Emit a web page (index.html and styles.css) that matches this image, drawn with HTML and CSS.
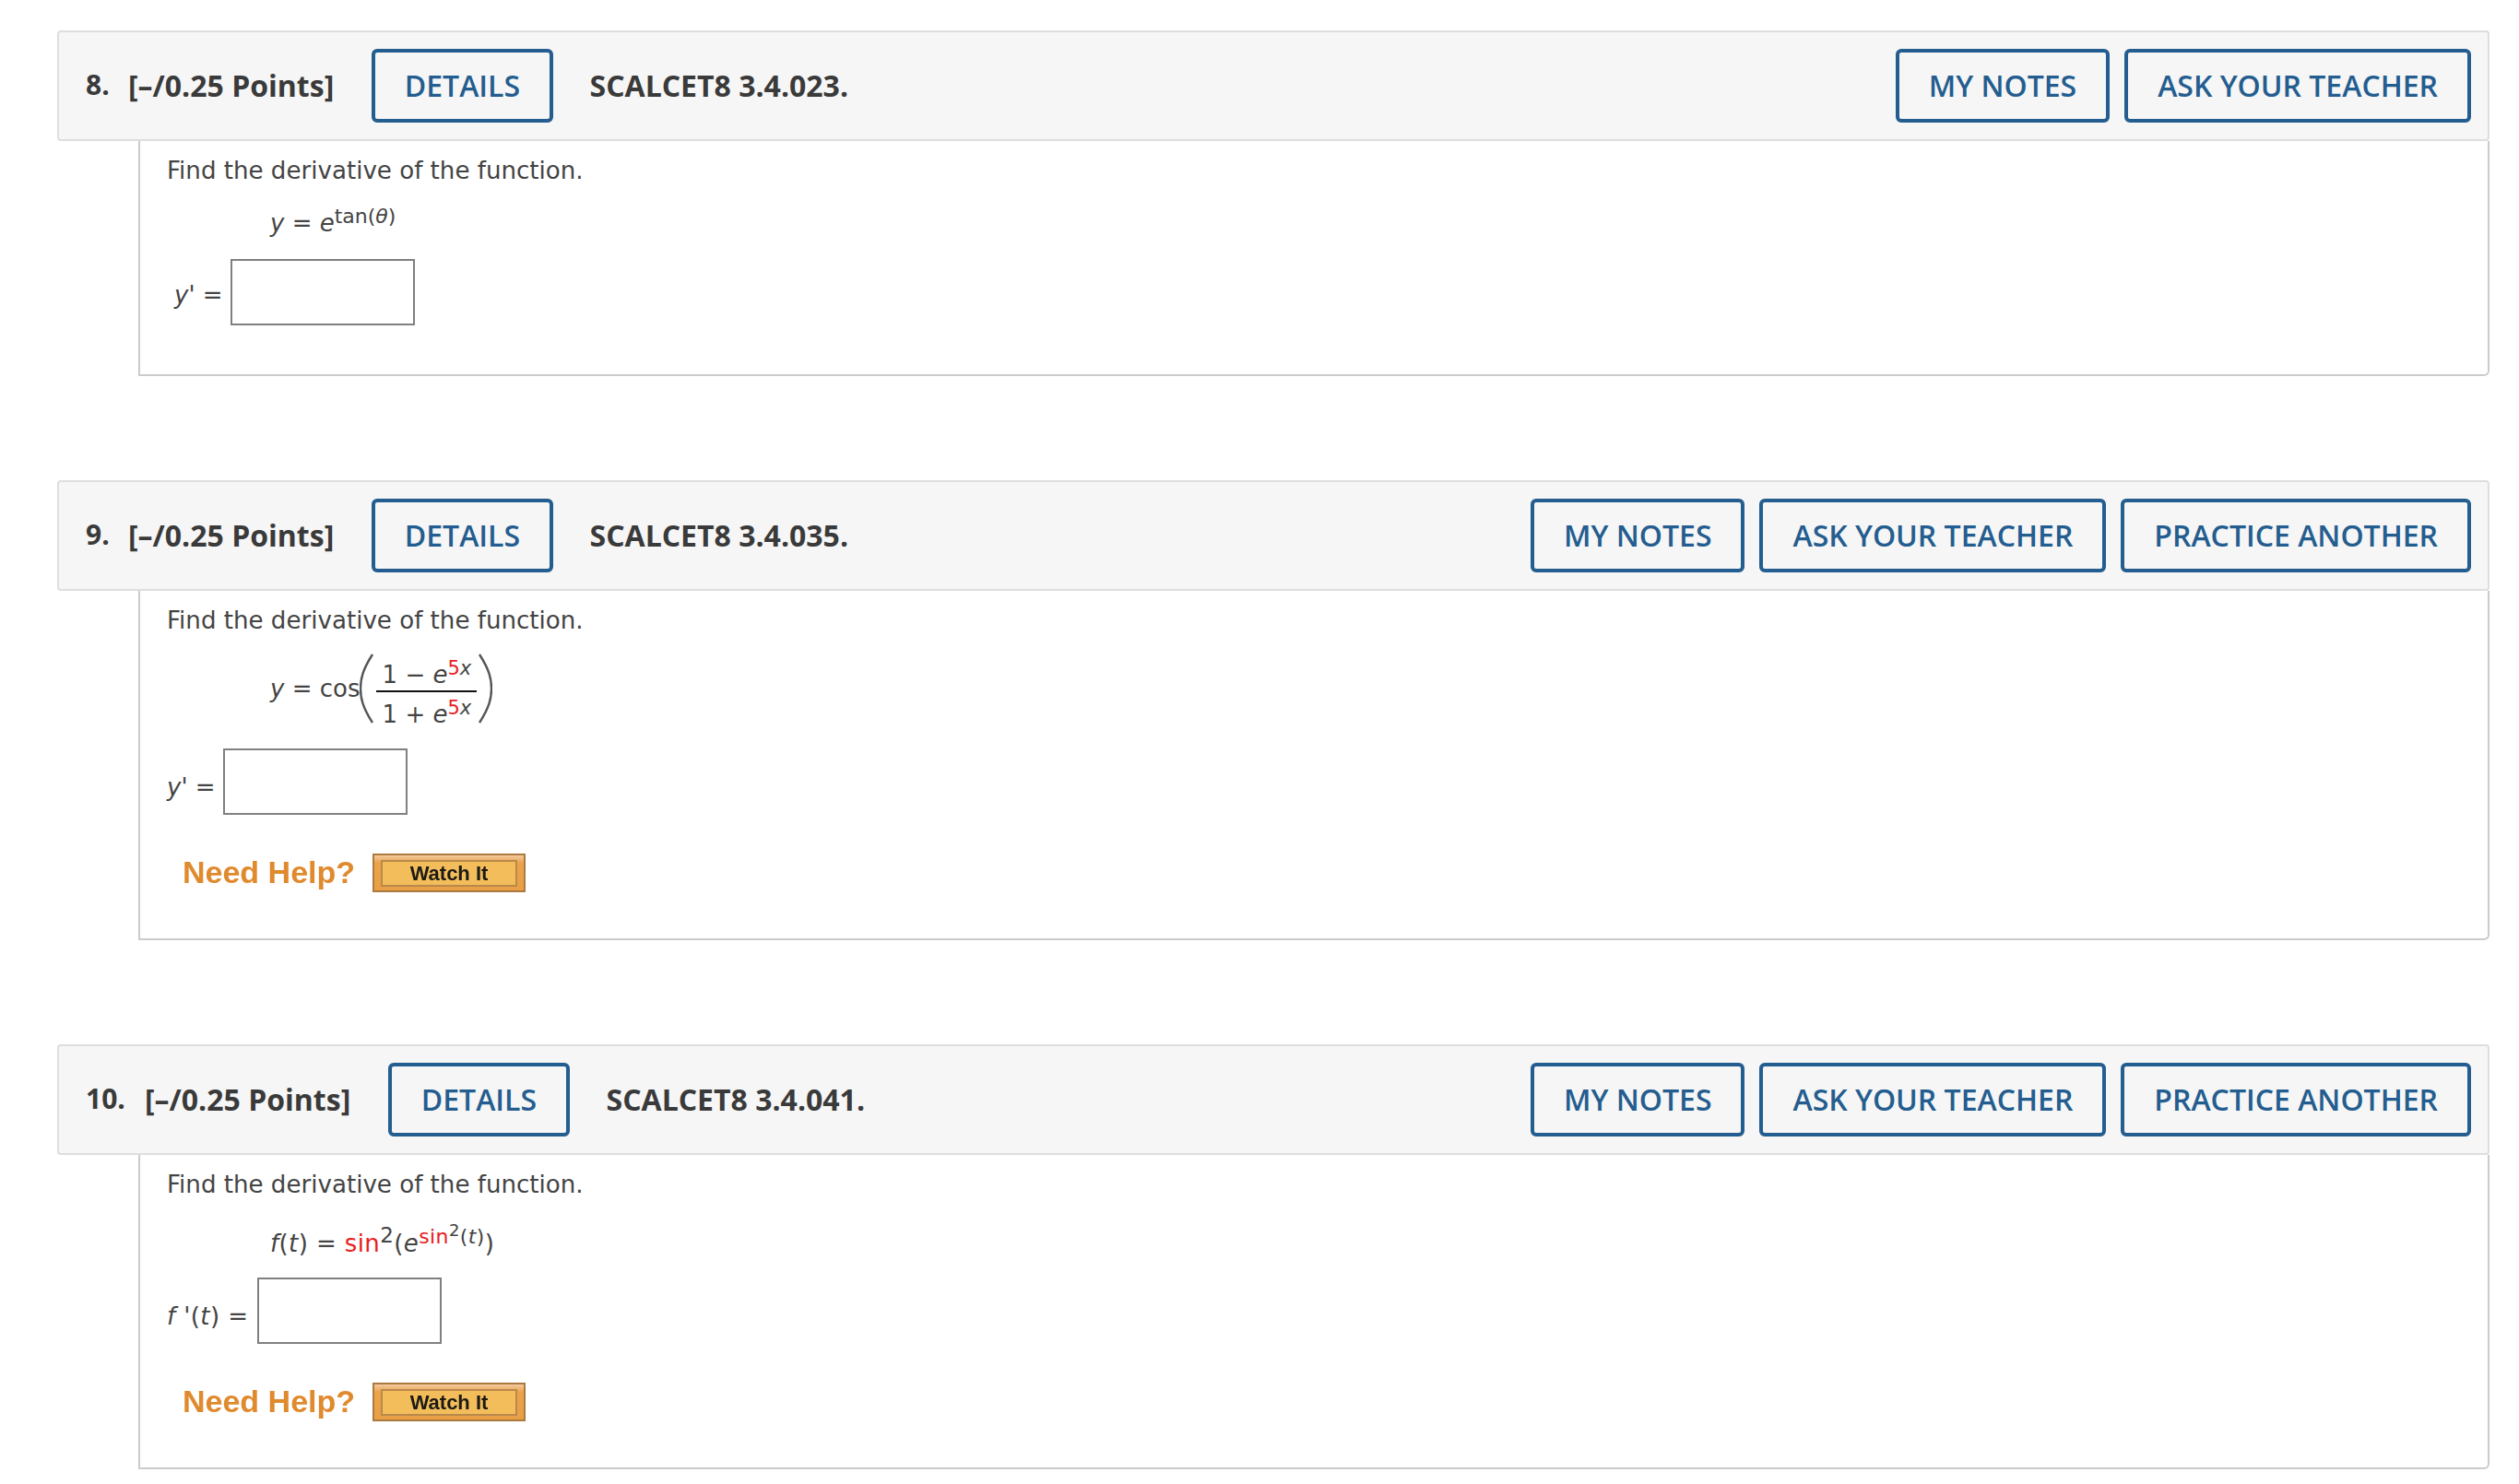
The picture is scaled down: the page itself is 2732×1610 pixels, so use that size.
FILE: index.html
```html
<!DOCTYPE html>
<html lang="en">
<head>
<meta charset="utf-8">
<title>SCALCET8 questions</title>
<link rel="stylesheet" href="styles.css">
</head>
<body>
<main class="page">
  <section class="question q8">
    <header class="qhead">
      <span class="num">8.</span>
      <span class="pts">[–/0.25 Points]</span>
      <button class="btn details">DETAILS</button>
      <span class="code">SCALCET8 3.4.023.</span>
      <div class="actions">
        <button class="btn">MY NOTES</button>
        <button class="btn">ASK YOUR TEACHER</button>
      </div>
    </header>
    <div class="qbody">
      <p class="prompt">Find the derivative of the function.</p>
      <div class="formula f8"><i>y</i>&nbsp;= <i>e</i><span class="sup">tan(<i>θ</i>)</span></div>
      <div class="answer a8"><span class="label l8"><i>y'</i> =</span><input class="field" type="text"></div>
    </div>
  </section>

  <section class="question q9">
    <header class="qhead">
      <span class="num">9.</span>
      <span class="pts">[–/0.25 Points]</span>
      <button class="btn details">DETAILS</button>
      <span class="code">SCALCET8 3.4.035.</span>
      <div class="actions">
        <button class="btn">MY NOTES</button>
        <button class="btn">ASK YOUR TEACHER</button>
        <button class="btn">PRACTICE ANOTHER</button>
      </div>
    </header>
    <div class="qbody">
      <p class="prompt">Find the derivative of the function.</p>
      <div class="formula f9">
        <span><i>y</i>&nbsp;= cos</span>
        <svg class="paren" viewBox="0 0 16 76" width="16" height="76"><path d="M14 1C3 18 1 28 1 38s2 20 13 37" fill="none" stroke="#555" stroke-width="2.4"/></svg>
        <span class="frac">
          <span class="fnum">1 − <i>e</i><span class="sup fsup"><em class="red">5</em><i>x</i></span></span>
          <span class="fden">1 + <i>e</i><span class="sup fsup"><em class="red">5</em><i>x</i></span></span>
        </span>
        <svg class="paren" viewBox="0 0 16 76" width="16" height="76"><path d="M2 1c11 17 13 27 13 37s-2 20-13 37" fill="none" stroke="#555" stroke-width="2.4"/></svg>
      </div>
      <div class="answer a9"><span class="label l9"><i>y'</i> =</span><input class="field" type="text"></div>
      <div class="help h9"><span class="need">Need Help?</span><span class="watch"><span class="watch-in">Watch It</span></span></div>
    </div>
  </section>

  <section class="question q10">
    <header class="qhead">
      <span class="num">10.</span>
      <span class="pts">[–/0.25 Points]</span>
      <button class="btn details">DETAILS</button>
      <span class="code">SCALCET8 3.4.041.</span>
      <div class="actions">
        <button class="btn">MY NOTES</button>
        <button class="btn">ASK YOUR TEACHER</button>
        <button class="btn">PRACTICE ANOTHER</button>
      </div>
    </header>
    <div class="qbody">
      <p class="prompt">Find the derivative of the function.</p>
      <div class="formula f10"><i>f</i>(<i>t</i>) = <span class="red">sin</span><span class="sup2">2</span>(<i>e</i><span class="sup"><span class="red">sin</span><span class="sup3">2</span>(<i>t</i>)</span>)</div>
      <div class="answer a10"><span class="label l10"><i>f</i> '(<i>t</i>) =</span><input class="field" type="text"></div>
      <div class="help h10"><span class="need">Need Help?</span><span class="watch"><span class="watch-in">Watch It</span></span></div>
    </div>
  </section>
</main>
</body>
</html>
```
FILE: styles.css
```css
* { box-sizing: border-box; }
html, body { margin: 0; padding: 0; background: #fff; }
body { font-family: "DejaVu Sans", Verdana, sans-serif; color: #444; overflow: hidden; }
.page { padding: 33px 32px 0 62px; }
.question + .question { margin-top: 113px; }
.q10 { margin-top: 114px; }

.qhead {
  height: 120px;
  display: flex;
  align-items: center;
  padding: 0 18px 1px 29px;
  background: #f6f6f6;
  border: 2px solid #dedede;
  border-radius: 4px;
  font-family: "Open Sans", sans-serif;
  color: #3a3a3a;
}
.num { font-size: 30px; font-weight: 700; width: 46px; position: relative; top: -1px; }
.pts { font-size: 32px; font-weight: 700; margin-right: 41px; white-space: nowrap; }
.q10 .num { width: 64px; }
.code { font-size: 32px; font-weight: 700; margin-left: 40px; white-space: nowrap; }
.actions { margin-left: auto; display: flex; gap: 16px; }
.btn {
  height: 80px;
  padding: 0 32px;
  font-family: "Open Sans", sans-serif;
  font-size: 32px;
  font-weight: 600;
  color: #245d8f;
  background: #f6f6f6;
  border: 4px solid #245d8f;
  border-radius: 6px;
  white-space: nowrap;
}
.details { padding: 0 31.5px; }

.qbody {
  margin-left: 88px;
  padding: 0 0 0 29px;
  border: 2px solid #cbcbcb;
  border-top: 0;
  border-radius: 0 0 6px 0;
  font-size: 26.1px;
}
.q8 .qbody { height: 255px; }
.q9 .qbody { height: 379px; }
.q10 .qbody { height: 341px; }
.prompt { margin: 0; padding-top: 16px; line-height: 32px; }

.formula { margin-left: 112px; white-space: nowrap; font-size: 26px; }
.f8 { margin-top: 19px; line-height: 44px; }
.f9 { margin-top: 20px; height: 76px; display: flex; align-items: center; }
.f10 { margin-top: 26px; line-height: 44px; letter-spacing: 0.4px; }
.sup { font-size: 22px; position: relative; top: -9px; }
.sup2 { font-size: 23px; position: relative; top: -10px; }
.sup3 { font-size: 18px; position: relative; top: -8px; }
.red { color: #e8201c; font-style: normal; }

.frac { display: inline-flex; flex-direction: column; align-items: center; width: 109px; height: 76px; margin: 0 1px 0 2px; font-size: 26px; }
.fnum { border-bottom: 2px solid #111; width: 100%; text-align: center; height: 42px; line-height: 46px; flex: none; }
.fden { height: 34px; line-height: 48px; text-align: center; width: 100%; flex: none; }
.fsup { font-size: 21px; }
.paren { flex: none; }

.answer { display: flex; align-items: center; height: 72px; }
.a8 { margin-top: 15px; margin-left: 8px; }
.a9 { margin-top: 27px; }
.a10 { margin-top: 12px; }
.label { font-size: 26px; white-space: nowrap; position: relative; top: 6px; }
.l8 { top: 3px; }
.l8, .l9 { width: 61px; }
.l10 { width: 98px; letter-spacing: 0.4px; }
.field { width: 200px; height: 72px; border: 2px solid #808080; background: #fff; border-radius: 0; padding: 0; }

.help { display: flex; align-items: center; margin-left: 17px; }
.h9, .h10 { margin-top: 42px; }
.need { font-family: "Liberation Sans", sans-serif; font-weight: 700; font-size: 34px; color: #e08a2e; width: 206px; filter: blur(0.4px); white-space: nowrap; position: relative; top: -1px; }
.watch {
  width: 166px; height: 42px;
  display: flex; align-items: stretch;
  padding: 5px 7px 4px;
  background: linear-gradient(#f4c9a0 0, #eba44c 8px, #e89f45 100%);
  border: 2px solid #ac7a3e;
}
.watch-in {
  flex: 1;
  display: flex; align-items: center; justify-content: center;
  background: #f3bd5b;
  border: 2px solid #b9894c;
  font-family: "Liberation Sans", sans-serif;
  font-weight: 700;
  font-size: 22px;
  color: #1c1a14;
  filter: blur(0.4px);
  white-space: nowrap;
}
```
